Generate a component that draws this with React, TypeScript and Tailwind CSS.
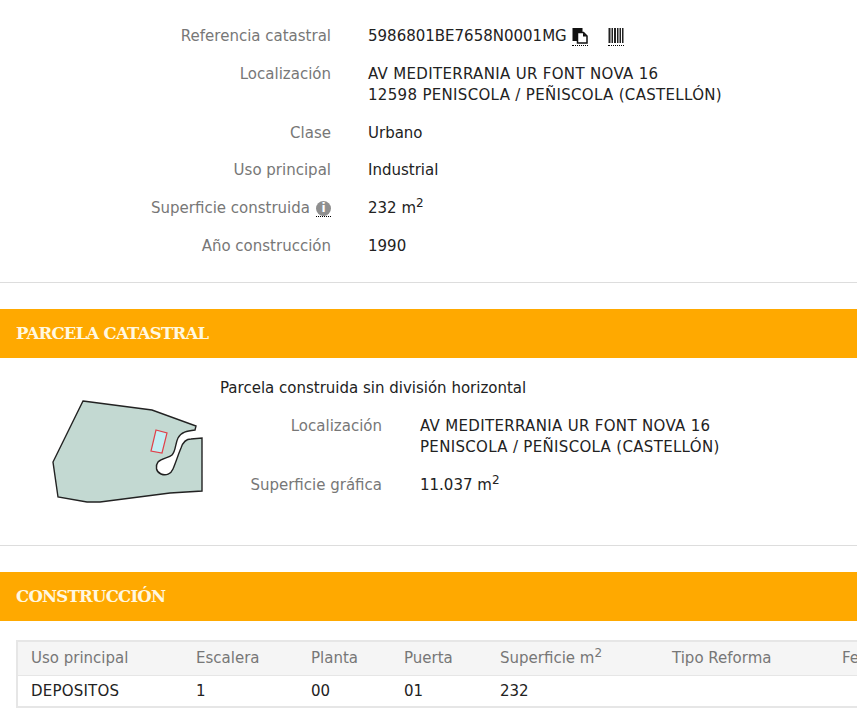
import React from 'react';

const FONT = "font-['DejaVu_Sans','Verdana',sans-serif]";
const CAPS = 'tracking-[0.32px]';

const Row = ({ label, children }: { label: React.ReactNode; children: React.ReactNode }) => (
  <div className="flex">
    <div className="w-[331px] shrink-0 text-right text-[#777]">{label}</div>
    <div className="ml-[37px] text-[#222]">{children}</div>
  </div>
);

const Band = ({ title }: { title: string }) => (
  <div className="h-[49px] bg-[#ffa900] pl-4 flex items-center">
    <h2 className="font-['DejaVu_Serif',serif] font-bold text-[16.5px] tracking-[-0.75px] text-[#fff8e0]">{title}</h2>
  </div>
);

const Sup = () => <span className="text-[12px] relative -top-[6px] leading-none">2</span>;

const CopyIcon = () => (
  <svg width="16" height="16" viewBox="0 0 16 16">
    <rect x="0.5" y="0" width="10" height="13" fill="#111" />
    <path d="M5.5 4.5h6l3.5 3.5v7h-9.5z" fill="#fff" stroke="#111" strokeWidth="1.5" />
    <path d="M11 4.5v4h4" fill="#111" />
  </svg>
);

const BarcodeIcon = () => (
  <svg width="16" height="16" viewBox="0 0 16 16" fill="#222">
    <rect x="0.5" y="0" width="2" height="15" />
    <rect x="3.5" y="0" width="1.5" height="15" />
    <rect x="6" y="0" width="2" height="15" />
    <rect x="9" y="0" width="1.5" height="15" />
    <rect x="11.5" y="0" width="1.5" height="15" />
    <rect x="14" y="0" width="1.5" height="15" />
  </svg>
);

const cols = [
  { title: 'Uso principal', value: 'DEPOSITOS', w: 'w-[166px]' },
  { title: 'Escalera', value: '1', w: 'w-[115px]' },
  { title: 'Planta', value: '00', w: 'w-[93px]' },
  { title: 'Puerta', value: '01', w: 'w-[96px]' },
  { title: 'Superficie', value: '232', w: 'w-[172px]', sup: true },
  { title: 'Tipo Reforma', value: '', w: 'w-[170px]' },
  { title: 'Fecha Reforma', value: '', w: 'w-[160px]' },
];

export default function App() {
  return (
    <div className={`${FONT} w-[857px] h-[722px] overflow-hidden bg-white text-[15px] leading-[21.6px]`}>
      <div className="pt-[26px] pb-[25px] flex flex-col gap-4 border-b border-[#ddd]">
        <Row label="Referencia catastral">
          <span className="flex items-center">
            5986801BE7658N0001MG
            <span className="ml-[5px] border-b border-dotted border-black h-[18px] flex">
              <CopyIcon />
            </span>
            <span className="ml-[20px] border-b border-dotted border-black h-[18px] flex">
              <BarcodeIcon />
            </span>
          </span>
        </Row>
        <Row label="Localización">
          <div className={CAPS}>
            AV MEDITERRANIA UR FONT NOVA 16
            <br />
            12598 PENISCOLA / PEÑISCOLA (CASTELLÓN)
          </div>
        </Row>
        <Row label="Clase">Urbano</Row>
        <Row label="Uso principal">Industrial</Row>
        <Row
          label={
            <span className="inline-flex items-center gap-[6px]">
              Superficie construida
              <span className="w-[15px] h-[16px] border-b border-dotted border-black flex justify-center">
                <span className="w-[15px] h-[15px] rounded-full bg-[#8f8f8f] text-white text-[12px] leading-[15px] font-bold text-center">i</span>
              </span>
            </span>
          }
        >
          232 m<Sup />
        </Row>
        <Row label="Año construcción">1990</Row>
      </div>

      <div className="mt-[26px]">
        <Band title="PARCELA CATASTRAL" />
      </div>
      <div className="h-[188px] flex border-b border-[#ddd]">
        <svg width="190" height="130" viewBox="0 0 190 130" className="ml-[30px] mt-[27px] shrink-0">
          <path
            d="M53 16L122 25L166 41L165 45C157 46 151 47 148 53C145 59 146 66 142 70C139 73 132 73 128 77C125 81 126 87 131 89C136 91 141 89 143 84C146 77 148 70 151 63C153 57 156 54 161 54L172 53L172 106L140 108L70 117L57 117L28 112L23 77Z"
            fill="#c3d9d2"
            stroke="#222"
            strokeWidth="1.4"
          />
          <path d="M126 45L137 48L132 68L121 66Z" fill="#c4eef3" stroke="#e0404a" strokeWidth="1.2" />
        </svg>
        <div className="pt-[20px]">
          <div className="text-[#222]">Parcela construida sin división horizontal</div>
          <div className="mt-4 flex flex-col gap-4">
            <div className="flex">
              <div className="w-[162px] text-right text-[#777]">Localización</div>
              <div className={`ml-[38px] text-[#222] ${CAPS}`}>
                AV MEDITERRANIA UR FONT NOVA 16
                <br />
                PENISCOLA / PEÑISCOLA (CASTELLÓN)
              </div>
            </div>
            <div className="flex">
              <div className="w-[162px] text-right text-[#777]">Superficie gráfica</div>
              <div className="ml-[38px] text-[#222]">
                11.037 m<Sup />
              </div>
            </div>
          </div>
        </div>
      </div>

      <div className="mt-[26px]">
        <Band title="CONSTRUCCIÓN" />
      </div>
      <div className="mt-[19px] ml-4">
        <table className="table-fixed w-[972px] border-2 border-[#e6e6e6] border-collapse">
          <thead>
            <tr className="bg-[#f5f5f5] h-[34px]">
              {cols.map((c) => (
                <th key={c.title} className={`${c.w} pl-[13px] pt-[1px] text-left font-normal text-[#777]`}>
                  {c.title}
                  {c.sup && (
                    <>
                      {' '}m<Sup />
                    </>
                  )}
                </th>
              ))}
            </tr>
          </thead>
          <tbody>
            <tr className="h-[32px] border-t border-[#e6e6e6]">
              {cols.map((c) => (
                <td key={c.title} className={`pl-[13px] pt-[1px] text-[#222] ${c.value === 'DEPOSITOS' ? 'tracking-[0.2px]' : ''}`}>{c.value}</td>
              ))}
            </tr>
          </tbody>
        </table>
      </div>
    </div>
  );
}
